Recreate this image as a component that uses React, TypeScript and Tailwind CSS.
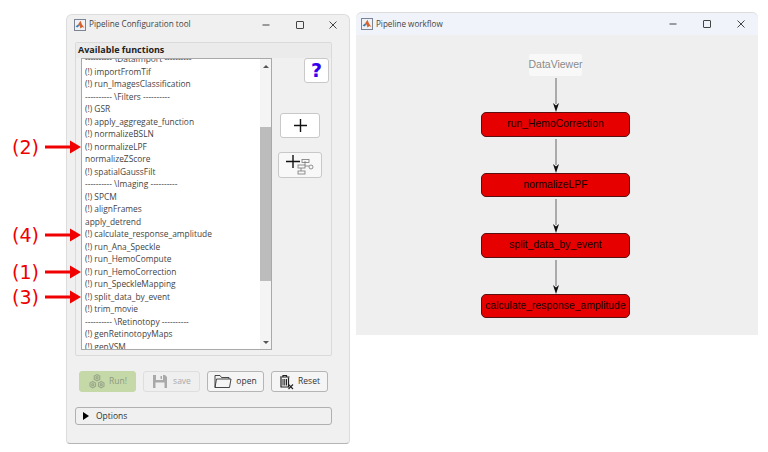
const rows = [
  "---------- \\DataImport ----------",
  "(!) importFromTif",
  "(!) run_ImagesClassification",
  "---------- \\Filters ----------",
  "(!) GSR",
  "(!) apply_aggregate_function",
  "(!) normalizeBSLN",
  "(!) normalizeLPF",
  "normalizeZScore",
  "(!) spatialGaussFilt",
  "---------- \\Imaging ----------",
  "(!) SPCM",
  "(!) alignFrames",
  "apply_detrend",
  "(!) calculate_response_amplitude",
  "(!) run_Ana_Speckle",
  "(!) run_HemoCompute",
  "(!) run_HemoCorrection",
  "(!) run_SpeckleMapping",
  "(!) split_data_by_event",
  "(!) trim_movie",
  "---------- \\Retinotopy ----------",
  "(!) genRetinotopyMaps",
  "(!) genVSM",
];

const callouts = [
  { label: "(2)", top: 134 },
  { label: "(4)", top: 222 },
  { label: "(1)", top: 259 },
  { label: "(3)", top: 284 },
];

const nodes = ["run_HemoCorrection", "normalizeLPF", "split_data_by_event", "calculate_response_amplitude"];

function MatlabLogo() {
  return (
    <svg width="12" height="12" viewBox="0 0 12 12" className="shrink-0">
      <rect x="0.5" y="0.5" width="11" height="11" fill="#eef1f6" stroke="#7b8494" />
      <path d="M1.5 7.5 L4 5.5 L5.5 6.5 L3.5 8.5 Z" fill="#3f7fb5" />
      <path d="M4 5.5 L6.5 1.8 L8 5.5 L10.5 9 L8.5 8 L6.5 9.5 L5.5 6.5 Z" fill="#d9622b" />
    </svg>
  );
}

function WindowControls({ gap }: { gap: string }) {
  return (
    <div className={`ml-auto flex items-center ${gap}`}>
      <svg width="10" height="10" viewBox="0 0 10 10">
        <path d="M1.5 5H8.5" stroke="#444" strokeWidth="1" />
      </svg>
      <svg width="10" height="10" viewBox="0 0 10 10">
        <rect x="1.5" y="1.5" width="7" height="7" rx="0.5" fill="none" stroke="#444" strokeWidth="1" />
      </svg>
      <svg width="10" height="10" viewBox="0 0 10 10">
        <path d="M1.5 1.5L8.5 8.5M8.5 1.5L1.5 8.5" stroke="#444" strokeWidth="1" />
      </svg>
    </div>
  );
}

function Btn({ className, children }: { className: string; children: React.ReactNode }) {
  return (
    <div className={`flex items-center justify-center rounded-[3px] border ${className}`}>{children}</div>
  );
}

function PlusIcon() {
  return (
    <svg width="15" height="15" viewBox="0 0 15 15">
      <path d="M7.5 1V14M1 7.5H14" stroke="#111" strokeWidth="1.4" />
    </svg>
  );
}

function FlowPlusIcon() {
  return (
    <svg width="30" height="22" viewBox="0 0 30 22">
      <path d="M8 1V14M1 7.5H15" stroke="#111" strokeWidth="1.4" />
      <g fill="none" stroke="#777" strokeWidth="0.8">
        <rect x="17" y="5.5" width="7" height="3" />
        <rect x="13" y="11" width="7" height="3" />
        <rect x="13" y="17" width="7" height="3" />
        <circle cx="26" cy="13" r="2" />
        <path d="M20 7V11M16 14V17M20 12H24" />
      </g>
    </svg>
  );
}

function RunIcon() {
  return (
    <svg width="18" height="18" viewBox="0 0 17 17" fill="none" stroke="#9aa98a" strokeWidth="1.1">
      <path d="M8.5 1.5l2.6 1.5v3l-2.6 1.5L5.900 6V3z" />
      <path d="M4.500 8l2.600 1.500v3L4.500 14l-2.600-1.500v-3z" />
      <path d="M12.500 8l2.600 1.500v3L12.500 14l-2.600-1.500v-3z" />
      <circle cx="8.500" cy="4.500" r="1" />
      <circle cx="4.500" cy="11" r="1" />
      <circle cx="12.500" cy="11" r="1" />
    </svg>
  );
}

function SaveIcon() {
  return (
    <svg width="16" height="15" viewBox="0 0 16 15">
      <path d="M1 1H13L15 3V14H1Z" fill="#a9a9a9" />
      <rect x="4" y="1" width="7" height="5" fill="#efefef" />
      <rect x="8.500" y="2" width="1.500" height="3" fill="#a9a9a9" />
      <rect x="3.500" y="8.500" width="9" height="5.500" fill="#efefef" />
    </svg>
  );
}

function FolderIcon() {
  return (
    <svg width="18" height="15" viewBox="0 0 18 15" fill="none" stroke="#333" strokeWidth="0.9">
      <path d="M1 13.500V1.500H6L7.500 3.500H15V5" />
      <path d="M1 13.500L2.500 5H17L15.500 13.500Z" />
    </svg>
  );
}

function TrashIcon() {
  return (
    <svg width="15" height="16" viewBox="0 0 15 16" fill="none" stroke="#222">
      <path d="M1 3H10.500M4 3V1.500H7.500V3" strokeWidth="1.200" />
      <path d="M2 3.500V13H9.500V3.500" strokeWidth="1.200" />
      <path d="M4 5V11.500M5.750 5V11.500M7.500 5V11.500" strokeWidth="1" />
      <path d="M9.500 10.500L14 15M14 10.500L9.500 15" strokeWidth="1.100" />
    </svg>
  );
}

function DownArrow() {
  return (
    <svg width="8" height="36" viewBox="0 0 8 36" className="block">
      <path d="M4 2V28" stroke="#666" strokeWidth="1" />
      <path d="M1 27L4 29.500L7 27L4 36Z" fill="#111" />
    </svg>
  );
}

function Callout({ label, top }: { label: string; top: number }) {
  return (
    <div className="absolute left-[12px] flex h-[26px] items-center" style={{ top }}>
      <span className="w-[33px] font-['DejaVu_Sans',sans-serif] text-[19px] leading-none text-[#ee0000]">{label}</span>
      <svg width="36" height="14" viewBox="0 0 36 14" className="block">
        <path d="M0 5.500H25V0.500L36 7L25 13.500V8.500H0Z" fill="#f00000" />
      </svg>
    </div>
  );
}

export default function App() {
  return (
    <div className="relative flex h-[452px] w-[768px] items-start overflow-hidden bg-white pl-[66px] font-['Open_Sans',sans-serif] text-[#333]">
      {/* config window */}
      <div className="mt-[14px] flex h-[430px] w-[284px] flex-col rounded-t-[6px] rounded-b-[4px] border border-[#dcdcdc] border-b-[#b5b5b5] bg-[#f0f0f0]">
        <div className="flex h-[19px] shrink-0 items-center pl-[7px] pr-[11px]">
          <MatlabLogo />
          <span className="ml-[3px] text-[8.200px] text-[#444]">Pipeline Configuration tool</span>
          <WindowControls gap="gap-[23.500px]" />
        </div>
        <div className="ml-[8px] mr-[17px] mt-[8px] flex h-[314px] shrink-0 flex-col rounded-[2px] border border-[#dadada]">
          <div className="h-[15px] bg-[#ebebeb] pl-[2px] text-[9px] font-bold leading-[14px] text-[#222]">
            Available functions
          </div>
          <div className="flex">
            <div className="relative ml-[5px] h-[292px] w-[191px] overflow-hidden border border-[#a9a9a9] bg-white pl-[3px]">
              <div className="mt-[-6px]">
                {rows.map((row) => (
                  <div key={row} className="h-[12.500px] whitespace-nowrap text-[8.400px] leading-[12.500px] text-[#444]">
                    {row}
                  </div>
                ))}
              </div>
              {/* scrollbar */}
              <div className="absolute inset-y-0 right-0 flex w-[11px] flex-col items-center bg-[#f4f4f4]">
                <div className="mt-[6px] h-0 w-0 border-x-[3px] border-b-[3px] border-x-transparent border-b-[#555]" />
                <div className="mt-[59px] h-[154px] w-full bg-[#bcbcbc]" />
                <div className="mt-[60px] h-0 w-0 border-x-[3px] border-t-[3px] border-x-transparent border-t-[#555]" />
              </div>
            </div>
            <div className="ml-[6px] flex flex-1 flex-col">
              <Btn className="ml-[26px] h-[25px] w-[25px] border-[#c8c8c8] bg-white font-['DejaVu_Sans',sans-serif] text-[19px] font-bold text-[#3300ee]">
                ?
              </Btn>
              <Btn className="ml-[2px] mt-[30px] h-[25px] w-[40px] border-[#c8c8c8] bg-white">
                <PlusIcon />
              </Btn>
              <Btn className="mt-[14px] h-[26px] w-[44px] border-[#c8c8c8] bg-[#f8f8f8]">
                <FlowPlusIcon />
              </Btn>
            </div>
          </div>
        </div>
        <div className="ml-[12px] mt-[15px] flex gap-[7px] text-[8.500px]">
          <Btn className="h-[21px] w-[57px] gap-[3px] border-[#c5d8a8] bg-[#c5d8a8] text-[#8d9b80]">
            <RunIcon />
            <span>Run!</span>
          </Btn>
          <Btn className="h-[21px] w-[57px] gap-[5px] border-[#dedede] bg-[#efefef] text-[#aaa]">
            <SaveIcon />
            <span>save</span>
          </Btn>
          <Btn className="h-[21px] w-[57px] gap-[4px] border-[#b5b5b5] bg-[#f5f5f5] text-[#333]">
            <FolderIcon />
            <span>open</span>
          </Btn>
          <Btn className="h-[21px] w-[57px] gap-[4px] border-[#b5b5b5] bg-[#f5f5f5] text-[#333]">
            <TrashIcon />
            <span>Reset</span>
          </Btn>
        </div>
        <div className="ml-[8px] mr-[17px] mt-[15px] flex h-[18px] items-center rounded-[3px] border border-[#b0b0b0] bg-[#f0f0f0] pl-[7px] text-[8.500px] text-[#333]">
          <div className="h-0 w-0 border-y-[4.500px] border-l-[6px] border-y-transparent border-l-black" />
          <span className="ml-[7px]">Options</span>
        </div>
      </div>

      {/* workflow window */}
      <div className="ml-[6px] mt-[12px] flex h-[323px] w-[402px] flex-col rounded-t-[6px] bg-[#efefef]">
        <div className="flex h-[23px] shrink-0 items-center rounded-t-[6px] border-t border-[#dcdcdc] bg-[#f0f3f9] pl-[5px] pr-[12px]">
          <MatlabLogo />
          <span className="ml-[3px] text-[8.100px] text-[#444]">Pipeline workflow</span>
          <WindowControls gap="gap-[24px]" />
        </div>
        <div className="flex flex-col items-center pr-[3px] pt-[19px]">
          <div className="flex h-[22px] w-[53px] items-center justify-center rounded-[2px] bg-[#f8f8f8] font-['Liberation_Sans',sans-serif] text-[10.500px] text-[#8a8a8a]">
            DataViewer
          </div>
          <DownArrow />
          {nodes.map((name, i) => (
            <div key={name} className="flex flex-col items-center">
              <div className="flex h-[24.500px] w-[149px] items-center justify-center rounded-[5px] border border-[#5a1010] bg-[#e60000] font-['Liberation_Sans',sans-serif] text-[10.400px] text-[#140000]">
                {name}
              </div>
              {i < nodes.length - 1 && <DownArrow />}
            </div>
          ))}
        </div>
      </div>

      {callouts.map((c) => (
        <Callout key={c.label} label={c.label} top={c.top} />
      ))}
    </div>
  );
}
